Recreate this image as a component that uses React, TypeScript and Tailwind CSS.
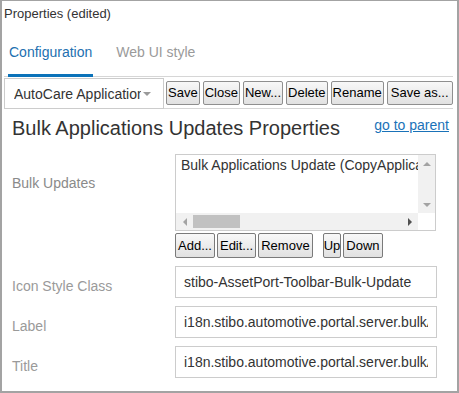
import React from "react";

function Tri({ dir, color }: { dir: "up" | "down" | "left" | "right"; color: string }) {
  const pts: Record<string, string> = {
    up: "0,4 8,4 4,0",
    down: "0,0 8,0 4,4",
    left: "4,0 4,8 0,4",
    right: "0,0 0,8 4,4",
  };
  const vertical = dir === "up" || dir === "down";
  return (
    <svg width={vertical ? 8 : 4} height={vertical ? 4 : 8} viewBox={vertical ? "0 0 8 4" : "0 0 4 8"}>
      <polygon points={pts[dir]} fill={color} />
    </svg>
  );
}

function TBtn({ children, className = "" }: { children: React.ReactNode; className?: string }) {
  return (
    <button
      className={
        "h-[24px] px-[1px] whitespace-nowrap border border-[#8f8f8f] rounded-[2px] bg-gradient-to-b from-[#f8f8f8] to-[#e1e1e1] text-[13px] leading-[16px] text-black " +
        className
      }
    >
      {children}
    </button>
  );
}

function LBtn({ children, className = "px-[2px]" }: { children: React.ReactNode; className?: string }) {
  return (
    <button
      className={
        "h-[25px] whitespace-nowrap border border-[#7a7a7a] rounded-[2px] bg-gradient-to-b from-[#f8f8f8] to-[#e1e1e1] text-[13px] leading-[16px] text-black " +
        className
      }
    >
      {children}
    </button>
  );
}

function Field({ label, value }: { label: string; value: string }) {
  return (
    <div className="flex">
      <div className="w-[163px] pt-[12px] text-[14px] leading-[16px] text-[#9a9a9a]">{label}</div>
      <input
        readOnly
        value={value}
        className="w-[262px] h-[32px] border border-[#cccccc] px-[8px] text-[14px] text-[#333] bg-white outline-none"
      />
    </div>
  );
}

export default function App() {
  return (
    <div className="w-[459px] h-[393px] bg-white border-t border-l-2 border-r-2 border-b-2 border-[#a3a3a3] font-['Liberation_Sans',Arial,sans-serif] text-[#333] overflow-hidden">
      <div className="pl-[2px] pt-[5px] text-[13px] leading-[16px] text-[#333]">Properties (edited)</div>

      <div className="ml-[2px] mr-[4px] border-b border-[#d6d6d6] flex pl-[4px] text-[14px] leading-[16px]">
        <div className="px-[1px] pt-[22px] pb-[14px] border-b-[3px] border-[#0b72b9] text-[#2270b0] -mb-px">
          Configuration
        </div>
        <div className="ml-[22px] px-[1px] pt-[22px] pb-[14px] text-[#9a9a9a]">Web UI style</div>
      </div>

      <div className="ml-[2px] mr-[4px] h-[32px] flex items-center border-b border-[#d6d6d6]">
        <div className="self-stretch mt-[1px] -mb-px w-[160px] border border-[#cccccc] flex items-center pl-[9px] pr-[10px]">
          <div className="w-[127px] overflow-hidden whitespace-nowrap text-[14px] leading-[16px] text-[#333]">
            AutoCare Applications
          </div>
          <div className="ml-[2px] flex items-center">
            <Tri dir="down" color="#9a9a9a" />
          </div>
        </div>
        <div className="ml-[2px] flex gap-[3px]">
          <TBtn>Save</TBtn>
          <TBtn>Close</TBtn>
          <TBtn>New...</TBtn>
          <TBtn>Delete</TBtn>
          <TBtn>Rename</TBtn>
          <TBtn className="px-[3px]">Save as...</TBtn>
        </div>
      </div>

      <div className="ml-[2px] mr-[4px] pl-[8px] pr-[4px] pt-[7px] flex justify-between items-start">
        <div className="text-[20px] leading-[24px] text-[#333]">Bulk Applications Updates Properties</div>
        <a className="mt-[1px] text-[14px] leading-[16px] text-[#1a72b8] underline">go to parent</a>
      </div>

      <div className="ml-[2px] pl-[8px] mt-[14px]">
        <div className="flex">
          <div className="w-[163px] pt-[21px] text-[14px] leading-[16px] text-[#8a8a8a]">Bulk Updates</div>
          <div>
            <div className="w-[261px] h-[77px] border border-[#cccccc] flex flex-col">
              <div className="flex flex-1">
                <div className="flex-1 overflow-hidden whitespace-nowrap pl-[5px] pt-[2px] text-[14px] leading-[16px] text-[#333]">
                  Bulk Applications Update (CopyApplications)
                </div>
                <div className="w-[17px] bg-[#f1f1f1] flex flex-col justify-between">
                  <div className="h-[17px] flex items-center justify-center">
                    <Tri dir="up" color="#a3a3a3" />
                  </div>
                  <div className="h-[17px] flex items-center justify-center">
                    <Tri dir="down" color="#a3a3a3" />
                  </div>
                </div>
              </div>
              <div className="h-[17px] flex">
                <div className="flex-1 bg-[#f1f1f1] flex items-center">
                  <div className="w-[17px] h-[17px] flex items-center justify-center">
                    <Tri dir="left" color="#a3a3a3" />
                  </div>
                  <div className="w-[47px] h-[13px] bg-[#c1c1c1]" />
                  <div className="flex-1" />
                  <div className="w-[17px] h-[17px] flex items-center justify-center">
                    <Tri dir="right" color="#505050" />
                  </div>
                </div>
                <div className="w-[17px] bg-white" />
              </div>
            </div>
            <div className="mt-[2px] flex gap-[2px]">
              <LBtn>Add...</LBtn>
              <LBtn>Edit...</LBtn>
              <LBtn>Remove</LBtn>
              <LBtn className="ml-[8px] px-0">Up</LBtn>
              <LBtn>Down</LBtn>
            </div>
          </div>
        </div>

        <div className="mt-[8px] flex flex-col gap-[8px]">
          <Field label="Icon Style Class" value="stibo-AssetPort-Toolbar-Bulk-Update" />
          <Field label="Label" value="i18n.stibo.automotive.portal.server.bulkApplicationsUpdate.label" />
          <Field label="Title" value="i18n.stibo.automotive.portal.server.bulkApplicationsUpdate.title" />
        </div>
      </div>
    </div>
  );
}
